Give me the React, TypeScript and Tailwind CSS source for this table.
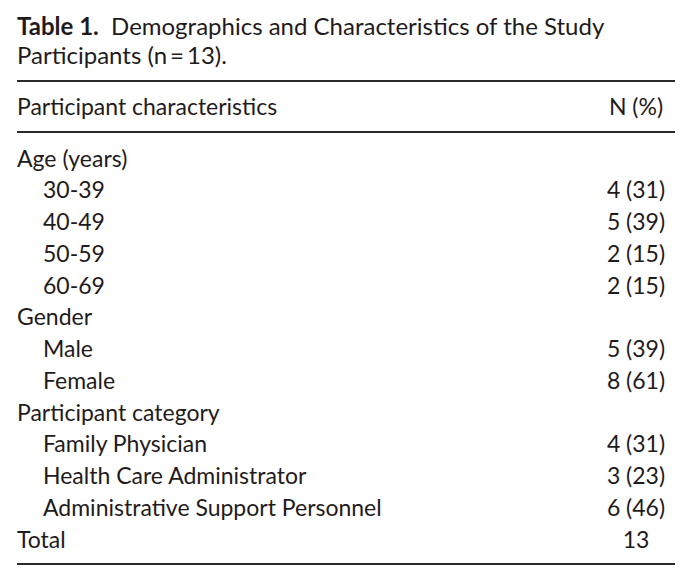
const rows: { label: string; value?: string; indent?: boolean }[] = [
  { label: "Age (years)" },
  { label: "30-39", value: "4 (31)", indent: true },
  { label: "40-49", value: "5 (39)", indent: true },
  { label: "50-59", value: "2 (15)", indent: true },
  { label: "60-69", value: "2 (15)", indent: true },
  { label: "Gender" },
  { label: "Male", value: "5 (39)", indent: true },
  { label: "Female", value: "8 (61)", indent: true },
  { label: "Participant category" },
  { label: "Family Physician", value: "4 (31)", indent: true },
  { label: "Health Care Administrator", value: "3 (23)", indent: true },
  { label: "Administrative Support Personnel", value: "6 (46)", indent: true },
  { label: "Total", value: "13" },
];

export default function App() {
  return (
    <div className="w-[692px] h-[581px] bg-white text-[#1f1b1c] font-['Lato',sans-serif] pl-[17px] pr-[17px] pt-[11px]">
      <h1 className="text-[24px] leading-[29px]">
        <span className="font-bold">Table 1.</span>&nbsp; Demographics and Characteristics of the Study
        <br />
        Participants (n{"\u2009"}={"\u2009"}13).
      </h1>

      <div className="mt-[11px] border-t-2 border-[#2a2a2a]" />
      <div className="flex items-center h-[49px] text-[23px]">
        <div className="flex-1">Participant characteristics</div>
        <div className="w-[78px] text-center">N (%)</div>
      </div>
      <div className="border-t-2 border-[#2a2a2a]" />

      <div className="pt-[9px] pb-[8px] text-[23px]">
        {rows.map((r) => (
          <div key={r.label} className="flex items-center h-[31.75px]">
            <div className={`flex-1 ${r.indent ? "pl-[26px]" : ""}`}>{r.label}</div>
            <div className="w-[78px] text-center">{r.value}</div>
          </div>
        ))}
      </div>
      <div className="border-t-2 border-[#2a2a2a]" />
    </div>
  );
}
